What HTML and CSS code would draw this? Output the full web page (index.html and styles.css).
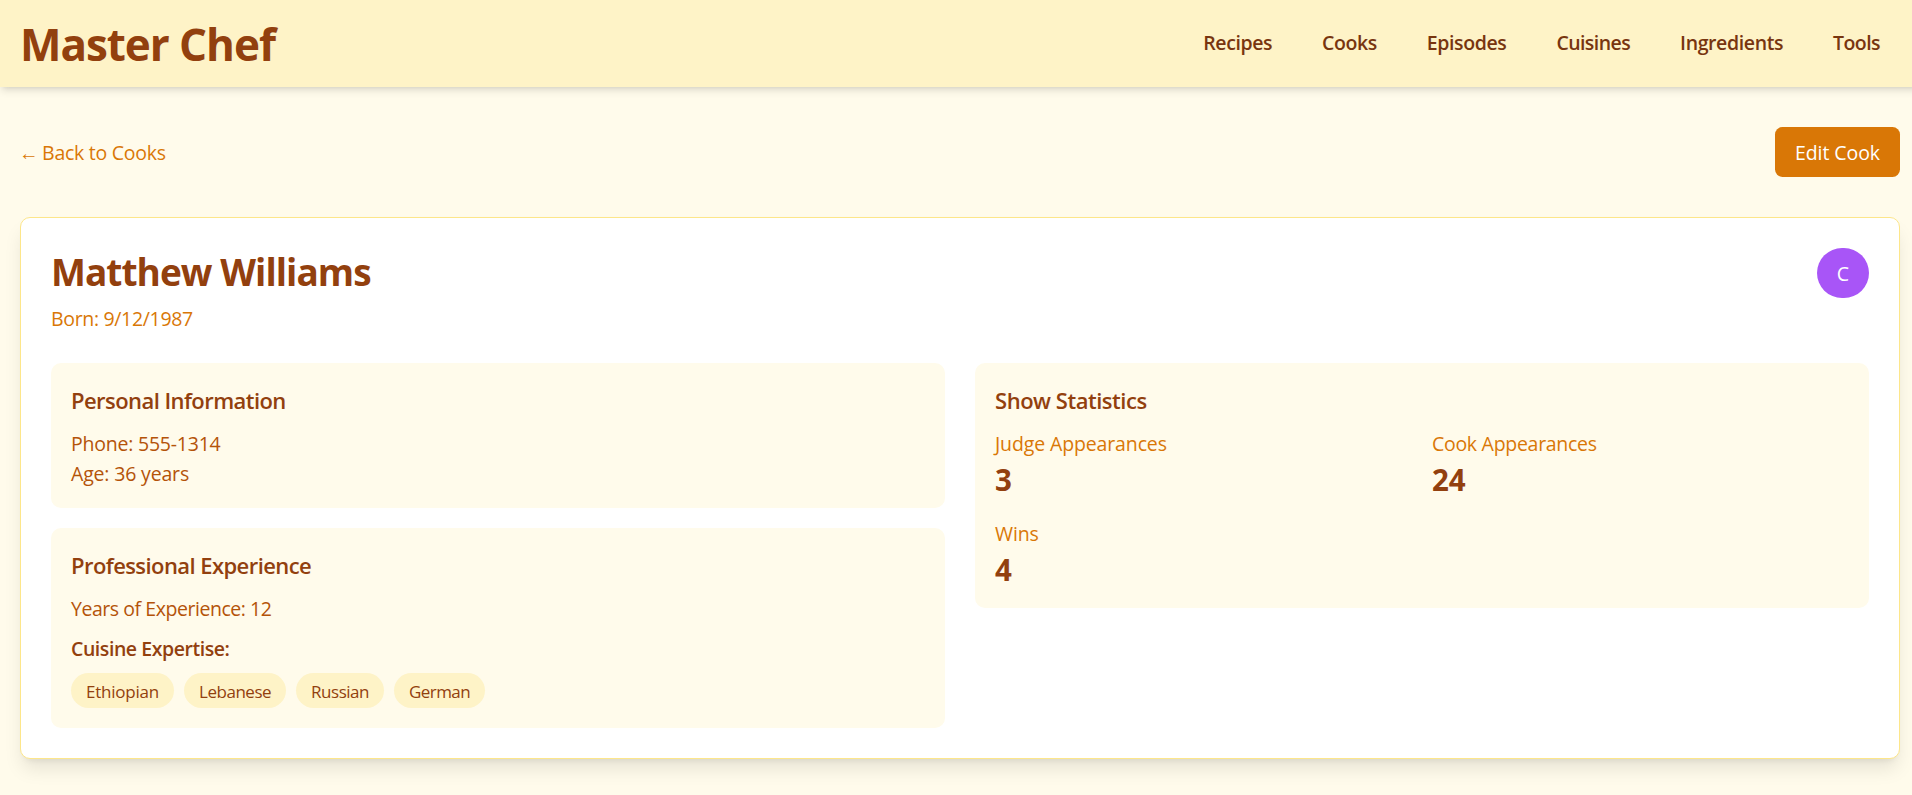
FILE: index.html
```
<!DOCTYPE html>
<html lang="en">
<head>
<meta charset="utf-8">
<title>Master Chef</title>
<link rel="stylesheet" href="styles.css">
</head>
<body>
<header class="site-header">
  <a class="brand">Master Chef</a>
  <nav class="nav">
    <a class="nav-link recipes">Recipes</a>
    <a class="nav-link cooks">Cooks</a>
    <a class="nav-link episodes">Episodes</a>
    <a class="nav-link cuisines">Cuisines</a>
    <a class="nav-link ingredients">Ingredients</a>
    <a class="nav-link tools">Tools</a>
  </nav>
</header>
<main class="page">
  <div class="toolbar">
    <a class="back-link"><span class="arrow">←</span> Back to Cooks</a>
    <a class="button">Edit Cook</a>
  </div>
  <article class="card">
    <div class="card-head">
      <div>
        <h1 class="name">Matthew Williams</h1>
        <p class="born">Born: 9/12/1987</p>
      </div>
      <span class="avatar">C</span>
    </div>
    <div class="columns">
      <div class="stack">
        <section class="panel">
          <h2 class="panel-title">Personal Information</h2>
          <p class="info phone">Phone: 555-1314</p>
          <p class="info age">Age: 36 years</p>
        </section>
        <section class="panel">
          <h2 class="panel-title professional">Professional Experience</h2>
          <p class="info years">Years of Experience: 12</p>
          <h3 class="subhead">Cuisine Expertise:</h3>
          <div class="tags">
            <span class="tag ethiopian">Ethiopian</span>
            <span class="tag">Lebanese</span>
            <span class="tag">Russian</span>
            <span class="tag german">German</span>
          </div>
        </section>
      </div>
      <section class="panel">
        <h2 class="panel-title statistics">Show Statistics</h2>
        <div class="stats">
          <div>
            <p class="stat-label">Judge Appearances</p>
            <p class="stat-value">3</p>
          </div>
          <div>
            <p class="stat-label cook-label">Cook Appearances</p>
            <p class="stat-value">24</p>
          </div>
          <div>
            <p class="stat-label">Wins</p>
            <p class="stat-value">4</p>
          </div>
        </div>
      </section>
    </div>
  </article>
</main>
</body>
</html>
```
FILE: styles.css
```
html { font-size: 20px; overflow: hidden; background: #fffbeb; }
* { box-sizing: border-box; }
body { margin: 0; width: 96rem; min-height: 795px; background: #fffbeb; font-family: "Segoe UI", "Open Sans", "Noto Sans", sans-serif; font-size: 19.5px; line-height: 30px; }
h1, h2, h3, p { margin: 0; }

.site-header { display: flex; justify-content: space-between; align-items: center; height: 87px; padding: 0 20px; background: #fef3c7; box-shadow: 0 5px 7.5px -1.25px rgba(0,0,0,.1), 0 2.5px 5px -2.5px rgba(0,0,0,.1); }
.brand { padding-top: 1px; font-size: 44px; line-height: 50px; font-weight: 700; letter-spacing: -1.05px; color: #92400e; }
.nav { display: flex; gap: 10px; }
.nav-link { padding: 9px 20px 11px; font-weight: 600; color: #78350f; }
.recipes, .cooks { letter-spacing: -.41px; }
.episodes { letter-spacing: -.4px; }
.cuisines, .tools { letter-spacing: -.57px; }
.ingredients { letter-spacing: -.38px; }

.page { padding: 40px 20px; }
.toolbar { display: flex; justify-content: space-between; align-items: center; margin-bottom: 40px; }
.back-link { height: 30px; line-height: 32px; letter-spacing: -.26px; color: #d97706; }
.arrow { margin: 0 -1px; }
.button { padding: 11px 20px 9px; border-radius: 7.5px; background: #d97706; color: #fff; letter-spacing: -.08px; }

.card { padding: 30px; border: 1px solid #fde68a; border-radius: 10px; background: #fff; box-shadow: 0 12.5px 18.75px -3.75px rgba(0,0,0,.1), 0 5px 7.5px -5px rgba(0,0,0,.1); }
.card-head { display: flex; justify-content: space-between; align-items: flex-start; margin-bottom: 30px; }
.name { height: 45px; font-size: 37px; line-height: 47px; font-weight: 700; letter-spacing: -.95px; color: #92400e; }
.born { height: 30px; margin-top: 10px; line-height: 32px; letter-spacing: -.33px; color: #d97706; }
.avatar { padding: 11px 20px 9px; border-radius: 999px; background: #a855f7; color: #fff; }

.columns { display: grid; grid-template-columns: 1fr 1fr; gap: 30px; align-items: start; }
.stack { display: grid; gap: 20px; }
.panel { padding: 20px; border-radius: 10px; background: #fffbeb; }
.panel-title { margin-bottom: 10px; font-size: 22px; line-height: 35px; font-weight: 600; letter-spacing: -.56px; color: #92400e; }
.professional { letter-spacing: -.57px; }
.statistics { letter-spacing: -.47px; }
.info { height: 30px; line-height: 32px; color: #b45309; }
.phone { letter-spacing: -.22px; }
.age { letter-spacing: -.17px; }
.years { letter-spacing: -.45px; }
.subhead { height: 30px; margin: 10px 0; font-size: 19.5px; line-height: 32px; font-weight: 600; letter-spacing: -.44px; color: #92400e; }
.tags { display: flex; gap: 10px; }
.tag { padding: 6px 15px 4px; border-radius: 999px; background: #fef3c7; color: #92400e; font-size: 17px; line-height: 25px; letter-spacing: -.48px; }
.ethiopian { letter-spacing: -.22px; }
.german { letter-spacing: -.58px; }

.stats { display: grid; grid-template-columns: 1fr 1fr; gap: 20px; }
.stat-label { height: 30px; line-height: 32px; letter-spacing: -.13px; color: #d97706; }
.cook-label { letter-spacing: -.29px; }
.stat-value { height: 40px; font-size: 29.5px; line-height: 43px; font-weight: 700; color: #92400e; }
```
